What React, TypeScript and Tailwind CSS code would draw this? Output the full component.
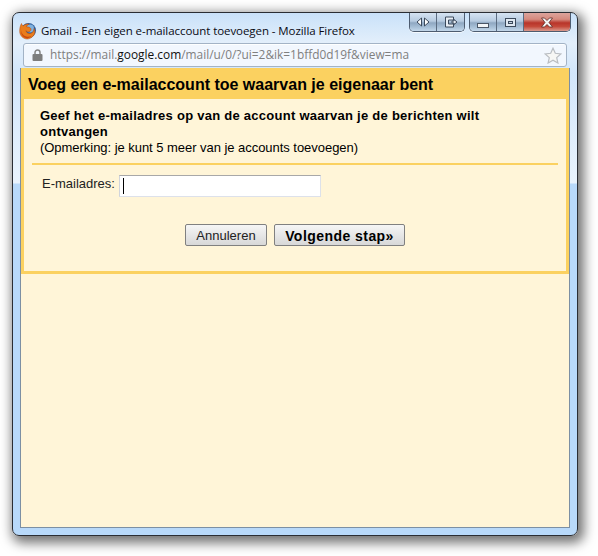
const arial = "font-['Liberation_Sans',Arial,sans-serif]";

function FirefoxIcon() {
  return (
    <svg width="18" height="18" viewBox="0 0 18 18" className="shrink-0">
      <circle cx="9.500" cy="8.500" r="7.500" fill="#2f5f9e" />
      <circle cx="11" cy="6.500" r="4" fill="#7fb2df" />
      <path d="M2.500 1.500c.3 1.400 1 2.100 1.800 2.400C5.800 2.400 8 1.600 10.200 2.200 8.700 2.700 7.700 3.500 7.300 4.600c1 .7 2.800.2 4 1.300 1 .9.900 2.400-.2 3.300-1.200 1-3.300.8-4.200-.6.300 2.200 2.400 3.400 4.500 2.900 2.200-.5 3.700-2.600 3.600-5 1.200 1.900 1.300 4.600-.1 6.600C13.400 15.200 10.800 17.200 8 17 4 16.800.8 13.500.7 9.500.6 6.700 1.200 3.700 2.500 1.500Z" fill="#ea7d1c" stroke="#b24a12" strokeWidth="0.500" />
      <path d="M2 8c.2 3.500 3 6.500 6.500 6.800 1.500.1 3-.3 4-1-1 1.500-3 2.500-5 2.300C4.200 15.800 1.700 12.400 2 8Z" fill="#c9470f" />
    </svg>
  );
}

function WinButton({ wide, red, last, children }: { wide?: boolean; red?: boolean; last?: boolean; children: React.ReactNode }) {
  return (
    <div
      className={`flex items-center justify-center h-full ${wide ? "w-[46px]" : "w-[27px]"} ${last ? "" : "border-r border-[#5a6b80]"} ${
        red
          ? "bg-[linear-gradient(#dca49c_0%,#d58a7e_35%,#b8352a_55%,#c4493a_75%,#d99a8e_100%)]"
          : "bg-[linear-gradient(#d5e3f2_0%,#b7cbe0_45%,#8fa8c2_55%,#a9c1d8_80%,#c3d7ea_100%)]"
      }`}
    >
      {children}
    </div>
  );
}

function TitleBar() {
  return (
    <div className="flex h-[30px] pl-[6px] pr-[6px]">
      <div className="flex items-center gap-[4px] flex-1 pt-[5px]">
        <FirefoxIcon />
        <span className="font-['Open_Sans',sans-serif] text-[11.5px] tracking-[-0.07px] text-[#0a0a14] whitespace-nowrap">
          Gmail - Een eigen e-mailaccount toevoegen - Mozilla Firefox
        </span>
      </div>
      <div className="flex h-[19px] gap-[4px]">
        <div className="flex h-full rounded-b-[5px] overflow-hidden border border-t-0 border-[#4d5c70] shadow-[0_1px_0_rgba(255,255,255,0.7)]">
          <WinButton>
            <svg width="14" height="10" viewBox="0 0 14 10">
              <path d="M5.500 1 1 5l4.500 4ZM8.500 1 13 5 8.500 9Z" fill="#fff" stroke="#3c4a5c" strokeWidth="1" />
            </svg>
          </WinButton>
          <WinButton last>
            <svg width="14" height="12" viewBox="0 0 14 12">
              <path d="M1.500 1h8v3h-5v4h5v3h-8ZM8 5h2V3.500L13 6l-3 2.500V7H8Z" fill="#e8eef5" stroke="#3c4a5c" strokeWidth="1" />
            </svg>
          </WinButton>
        </div>
        <div className="flex h-full rounded-b-[5px] overflow-hidden border border-t-0 border-[#4d5c70] shadow-[0_1px_0_rgba(255,255,255,0.7)]">
          <WinButton>
            <div className="w-[12px] h-[5px] mt-[6px] bg-[#f2f5f8] border border-[#4a5666]" />
          </WinButton>
          <WinButton>
            <div className="w-[11px] h-[9px] border border-[#3c4a5c] bg-[#dfe8f1] flex items-center justify-center">
              <div className="w-[5px] h-[3px] border border-[#3c4a5c] bg-[#c4d2e0]" />
            </div>
          </WinButton>
          <WinButton wide red last>
            <svg width="14" height="11" viewBox="0 0 14 11">
              <path d="M1.500 1h3L7 3.500 9.500 1h3L9 5.500l3.500 4.500h-3L7 7.500 4.500 10h-3L5 5.500Z" fill="#f4f4f4" stroke="#5a2a24" strokeWidth="0.8" />
            </svg>
          </WinButton>
        </div>
      </div>
    </div>
  );
}

function AddressBar() {
  return (
    <div className="mx-[10px] h-[24px] flex items-center border border-[#a3b3c6] rounded-[3px] bg-[#f2f7fe] pl-[8px] pr-[4px] shadow-[inset_0_1px_0_rgba(255,255,255,0.9)]">
      <svg width="11" height="12" viewBox="0 0 11 12" className="shrink-0">
        <path d="M3 5V3.500a2.500 2.500 0 0 1 5 0V5" fill="none" stroke="#858585" strokeWidth="1.500" />
        <rect x="0.500" y="5" width="10" height="7" rx="1" fill="#7d7d7d" />
      </svg>
      <span className="ml-[7px] font-['Open_Sans',sans-serif] text-[11.9px] text-[#7f7f7f] whitespace-nowrap flex-1">
        https://mail.<span className="text-[#111]">google.com</span>/mail/u/0/?ui=2&amp;ik=1bffd0d19f&amp;view=ma
      </span>
      <svg width="18" height="17" viewBox="0 0 18 17" className="shrink-0">
        <path d="M9 1.200 11.300 6.300 16.800 6.900 12.700 10.600 13.900 16 9 13.200 4.100 16 5.300 10.600 1.200 6.900 6.700 6.300Z" fill="#f7f7f5" stroke="#b9bdc2" strokeWidth="1.200" />
      </svg>
    </div>
  );
}

function DialogButton({ bold, width, children }: { bold?: boolean; width: string; children: React.ReactNode }) {
  return (
    <button
      className={`${width} h-[22px] pt-[1px] rounded-[2px] border border-[#808080] bg-[linear-gradient(#f6f6f6,#d8d8d8)] ${
        bold ? "font-bold text-[14px] tracking-[0.45px] text-black" : "text-[13px] text-[#222]"
      }`}
    >
      {children}
    </button>
  );
}

export default function App() {
  return (
    <div className="w-[598px] h-[556px] bg-white pt-[12px] pl-[12px] overflow-hidden">
      <div className="w-[566px] h-[524px] rounded-[7px] border border-[#2a2d33] shadow-[3px_4px_12px_3px_rgba(0,0,0,0.55)] bg-[linear-gradient(#c9e1f9_0px,#e3effb_30px,#d2e6fb_60px,#e9f3fd_170px,#b8d9fa_171px,#b8d9fa_100%)] flex flex-col">
        <TitleBar />
        <AddressBar />
        <div className={`mx-[7px] mt-[1px] mb-[7px] flex-1 border border-[#7c8fa3] border-t-0 bg-[#fff5d8] ${arial}`}>
          <div className="border-[3px] border-t-0 border-[#fbd160] bg-[#fff5d8] h-[206px]">
            <div className="h-[31px] -mx-[3px] bg-[#fbd160] pl-[7px] pt-[2px] flex items-center text-[16px] font-bold text-black whitespace-nowrap">
              Voeg een e-mailaccount toe waarvan je eigenaar bent
            </div>
            <div className="pl-[16px] pr-[8px] pt-[9px]">
              <div className="text-[13px] leading-[16px] text-black">
                <div className="font-bold tracking-[0.26px] pr-[60px]">Geef het e-mailadres op van de account waarvan je de berichten wilt ontvangen</div>
                <div className="tracking-[-0.04px]">(Opmerking: je kunt 5 meer van je accounts toevoegen)</div>
              </div>
              <div className="-ml-[8px] mt-[7px] h-[2px] bg-[#fbd160]" />
              <div className="flex items-center mt-[10px] ml-[2px] gap-[4px]">
                <span className="text-[13px] text-[#222] -mt-[5px]">E-mailadres:</span>
                <div className="w-[202px] h-[22px] bg-white border border-[#dde1ea] border-t-[#a8a8a8] border-l-[#d0d4dc] pl-[3px] py-[2px]">
                  <div className="w-[1px] h-[16px] bg-black" />
                </div>
              </div>
              <div className="flex gap-[7px] mt-[27px] ml-[145px]">
                <DialogButton width="w-[82px]">Annuleren</DialogButton>
                <DialogButton bold width="w-[131px]">Volgende stap»</DialogButton>
              </div>
            </div>
          </div>
        </div>
      </div>
    </div>
  );
}
